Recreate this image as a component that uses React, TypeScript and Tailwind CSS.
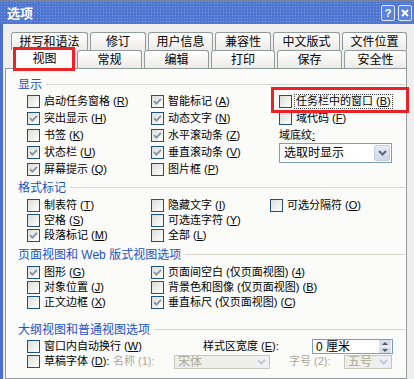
import React from 'react';

type OptProps = { label: string; k?: string; checked?: boolean; focus?: boolean; tail?: string };

const Check = ({ checked }: { checked?: boolean }) => (
  <span className="w-[13px] h-[13px] shrink-0 border border-[#1c5180] bg-linear-to-br from-[#dcdcd7] to-white flex items-center justify-center">
    {checked && (
      <svg width="9" height="9" viewBox="0 0 9 9">
        <polyline points="1,4.2 3.4,6.6 8,1.8" fill="none" stroke="#8694a6" strokeWidth="1.9" />
      </svg>
    )}
  </span>
);

const Opt = ({ label, k, checked, focus, tail = ')' }: OptProps) => (
  <div className="flex items-center gap-[3px] whitespace-nowrap">
    <Check checked={checked} />
    <span
      className={
        focus
          ? 'px-[1px] leading-[13px] outline-1 outline-dotted outline-[#444]'
          : 'px-[1px] leading-[13px]'
      }
    >
      {label}
      {k && (
        <>
          {' ('}
          <u>{k}</u>
          {tail}
        </>
      )}
    </span>
  </div>
);

const Head = ({ title }: { title: string }) => (
  <div className="flex items-center h-[15px] pl-[12px] pr-[1px]">
    <span className="text-[12px] text-[#2152c4] leading-none whitespace-nowrap">{title}</span>
    <span className="flex-1 h-px bg-[#d6d6cf] ml-[4px]" />
  </div>
);

const Tab = ({ label, w, active }: { label: string; w: number; active?: boolean }) => (
  <div
    style={{ width: w }}
    className={
      active
        ? 'h-[22px] mb-[-1px] relative z-10 border border-b-0 border-[#919b9c] rounded-t-[3px] bg-[#fcfcfc] text-[12px] flex items-center justify-center'
        : 'h-[18px] shrink-0 border border-b-0 border-[#919b9c] rounded-t-[3px] bg-linear-to-b from-white to-[#ecebe6] text-[12px] flex items-center justify-center'
    }
  >
    {label}
  </div>
);

const Chevron = ({ color }: { color: string }) => (
  <svg width="9" height="6" viewBox="0 0 9 6">
    <polyline points="1,1 4.5,4.5 8,1" fill="none" stroke={color} strokeWidth="2" />
  </svg>
);

const topTabs = [
  { label: '拼写和语法', w: 77 },
  { label: '修订', w: 56 },
  { label: '用户信息', w: 65 },
  { label: '兼容性', w: 56 },
  { label: '中文版式', w: 67 },
  { label: '文件位置', w: 65 },
];

const frontTabs = [
  { label: '视图', w: 61, active: true },
  { label: '常规', w: 65 },
  { label: '编辑', w: 65 },
  { label: '打印', w: 64 },
  { label: '保存', w: 65 },
  { label: '安全性', w: 63 },
];

export default function App() {
  return (
    <div className="w-[414px] h-[379px] overflow-hidden relative bg-[#efefef] text-black font-['Liberation_Sans','Noto_Sans_CJK_SC',sans-serif]">
      {/* title bar */}
      <div className="h-[24px] border-t-[2px] border-[#76839a] bg-[#4f76d0] bg-[radial-gradient(#7896e2_0.8px,transparent_0.8px)] bg-[length:3px_3px] flex items-center">
        <span className="pl-[7px] text-[13px] font-bold text-white leading-none">选项</span>
        <div className="ml-auto flex gap-[3px] pr-[2px]">
          <div className="w-[14px] h-[16px] border border-[#dfe8fb] rounded-[2px] bg-[#5b82dd] text-white text-[11px] font-bold leading-none flex items-center justify-center">
            ?
          </div>
          <div className="w-[14px] h-[16px] border border-[#dfe8fb] rounded-[2px] bg-[#5b82dd] flex items-center justify-center">
            <svg width="8" height="8" viewBox="0 0 8 8">
              <path d="M1 1 L7 7 M7 1 L1 7" stroke="white" strokeWidth="2" />
            </svg>
          </div>
        </div>
      </div>

      <div className="flex h-[355px]">
        <div className="w-[3px] bg-[#4a6fce]" />
        <div className="flex-1 flex flex-col pt-[8px]">
          <div className="flex gap-[2px] pl-[8px] h-[18px]">
            {topTabs.map((t) => (
              <Tab key={t.label} label={t.label} w={t.w} />
            ))}
          </div>
          <div className="flex items-end gap-[2px] pl-[11px] h-[18px] relative z-10">
            {frontTabs.map((t) => (
              <Tab key={t.label} label={t.label} w={t.w} active={t.active} />
            ))}
          </div>

          <div className="ml-[2px] w-[402px] flex-1 border border-[#919b9c] bg-[#fbfbfa] pt-[8px] text-[11px]">
            <Head title="显示" />
            <div className="grid grid-cols-[124px_128px_1fr] auto-rows-[17px] items-center pl-[21px] mt-[1px]">
              <Opt label="启动任务窗格" k="R" />
              <Opt label="智能标记" k="A" checked />
              <Opt label="任务栏中的窗口" k="B" focus />
              <Opt label="突出显示" k="H" checked />
              <Opt label="动态文字" k="N" checked />
              <Opt label="域代码" k="F" />
              <Opt label="书签" k="K" />
              <Opt label="水平滚动条" k="Z" checked />
              <span className="leading-[13px]">
                域底纹<u>:</u>
              </span>
              <Opt label="状态栏" k="U" checked />
              <Opt label="垂直滚动条" k="V" checked />
              <div className="row-span-2 self-start -mt-[1px] w-[113px] h-[20px] border border-[#7f9db9] bg-white flex items-center pl-[4px] text-[12px]">
                <span className="flex-1">选取时显示</span>
                <span className="w-[16px] h-[16px] mr-[1px] rounded-[2px] bg-linear-to-b from-[#e6ebf4] to-[#cfd8e8] border border-[#c3cde0] flex items-center justify-center">
                  <Chevron color="#59677f" />
                </span>
              </div>
              <Opt label="屏幕提示" k="Q" checked />
              <Opt label="图片框" k="P" />
            </div>

            <div className="mt-[2px]">
              <Head title="格式标记" />
            </div>
            <div className="grid grid-cols-[124px_119px_1fr] auto-rows-[15px] items-center pl-[21px] mt-[3px]">
              <Opt label="制表符" k="T" />
              <Opt label="隐藏文字" k="I" />
              <Opt label="可选分隔符" k="O" />
              <Opt label="空格" k="S" />
              <Opt label="可选连字符" k="Y" />
              <span />
              <Opt label="段落标记" k="M" checked />
              <Opt label="全部" k="L" />
            </div>

            <div className="mt-[4px]">
              <Head title="页面视图和 Web 版式视图选项" />
            </div>
            <div className="grid grid-cols-[124px_1fr] auto-rows-[15px] items-center pl-[21px] mt-[3px]">
              <Opt label="图形" k="G" checked />
              <Opt label="页面间空白 (仅页面视图)" k="4" checked />
              <Opt label="对象位置" k="J" />
              <Opt label="背景色和图像 (仅页面视图)" k="B" />
              <Opt label="正文边框" k="X" />
              <Opt label="垂直标尺 (仅页面视图)" k="C" checked />
            </div>

            <div className="mt-[12px]">
              <Head title="大纲视图和普通视图选项" />
            </div>
            <div className="pl-[21px] mt-[2px]">
              <div className="flex items-center h-[15px]">
                <div className="w-[176px]">
                  <Opt label="窗口内自动换行" k="W" />
                </div>
                <span className="w-[109px] whitespace-nowrap">
                  样式区宽度 (<u>E</u>):
                </span>
                <div className="w-[81px] h-[15px] border border-[#7f9db9] bg-white flex items-center text-[12px]">
                  <span className="flex-1 pl-[3px] leading-none">0 厘米</span>
                  <span className="w-[12px] h-[13px] mr-[1px] flex flex-col gap-[1px]">
                    <span className="flex-1 bg-[#d6deec] flex items-center justify-center">
                      <span className="w-0 h-0 border-x-[3px] border-x-transparent border-b-[3px] border-b-[#4d5b73]" />
                    </span>
                    <span className="flex-1 bg-[#d6deec] flex items-center justify-center">
                      <span className="w-0 h-0 border-x-[3px] border-x-transparent border-t-[3px] border-t-[#4d5b73]" />
                    </span>
                  </span>
                </div>
              </div>
              <div className="flex items-center h-[15px]">
                <div className="w-[86px]">
                  <Opt label="草稿字体" k="D" tail="):" />
                </div>
                <span className="w-[61px] whitespace-nowrap text-[#aca899]">名称 (1):</span>
                <div className="w-[96px] h-[14px] border border-[#c9c7ba] bg-[#eeeeea] flex items-center text-[12px] text-[#aca899] pl-[3px]">
                  <span className="flex-1 leading-none">宋体</span>
                  <span className="w-[13px] h-[12px] mr-[1px] bg-[#eef0f5] flex items-center justify-center">
                    <Chevron color="#c4cad6" />
                  </span>
                </div>
                <span className="ml-[19px] w-[55px] whitespace-nowrap text-[#aca899]">字号 (2):</span>
                <div className="w-[48px] h-[14px] border border-[#c9c7ba] bg-[#eeeeea] flex items-center text-[12px] text-[#aca899] pl-[3px]">
                  <span className="flex-1 leading-none">五号</span>
                  <span className="w-[13px] h-[12px] mr-[1px] bg-[#eef0f5] flex items-center justify-center">
                    <Chevron color="#c4cad6" />
                  </span>
                </div>
              </div>
            </div>
          </div>
        </div>
      </div>

      {/* red annotation boxes */}
      <div className="absolute left-[13px] top-[47px] w-[62px] h-[24px] border-[3px] border-[#ec2227] z-20" />
      <div className="absolute left-[271px] top-[87px] w-[138px] h-[26px] border-[3px] border-[#ec2227] z-20" />
    </div>
  );
}
